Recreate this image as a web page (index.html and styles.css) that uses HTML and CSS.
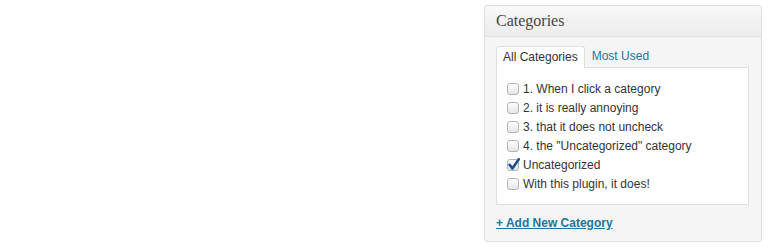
FILE: index.html
```html
<!DOCTYPE html>
<html>

    <head>
        <title>Categories</title>
        <link rel="stylesheet" href="styles.css">
    </head>

    <body>
        <div class="postbox">
            <h3 class="hndle">Categories</h3>
            <div class="inside">
                <ul class="tabs">
                    <li class="tab active">All Categories</li>
                    <li class="tab"><a href="#">Most Used</a></li>
                </ul>
                <div class="panel">
                    <ul class="checklist">
                        <li><span class="box"></span>1. When I click a category</li>
                        <li><span class="box"></span>2. it is really annoying</li>
                        <li><span class="box"></span>3. that it does not uncheck</li>
                        <li><span class="box"></span>4. the "Uncategorized" category</li>
                        <li>
                            <span class="box checked">
                                <svg viewBox="0 0 13 13" width="13" height="13">
                                    <path d="M2.6 6.8 L5.4 10.4 L11.8 1.2" fill="none" stroke="#1f4f8a" stroke-width="2.6" stroke-linecap="round" stroke-linejoin="round"/>
                                </svg>
                            </span>Uncategorized
                        </li>
                        <li><span class="box"></span>With this plugin, it does!</li>
                    </ul>
                </div>
                <a class="add-new" href="#">+ Add New Category</a>
            </div>
        </div>
    </body>

</html>
```

FILE: styles.css
```css
body {
    margin: 0;
    background: #fff;
    font-family: "Liberation Sans", Arial, sans-serif;
    font-size: 12px;
    color: #333;
}

.postbox {
    box-sizing: border-box;
    width: 278px;
    height: 237px;
    margin: 5px 0 0 484px;
    background: #f5f5f5;
    border: 1px solid #dfdfdf;
    border-radius: 3px;
}

.hndle {
    box-sizing: border-box;
    height: 31px;
    margin: 0;
    padding: 0 11px;
    line-height: 30px;
    font-family: "Liberation Serif", Georgia, serif;
    font-size: 16px;
    font-weight: normal;
    color: #464646;
    background: linear-gradient(#f9f9f9, #ececec);
    border-bottom: 1px solid #dfdfdf;
    border-radius: 3px 3px 0 0;
}

.inside {
    padding: 8px 12px 0 11px;
}

.tabs {
    display: flex;
    margin: 0;
    padding: 0;
    list-style: none;
}

.tab {
    height: 21px;
    padding: 0 6px;
    line-height: 21px;
    border: 1px solid transparent;
    border-bottom: none;
}

.tab a {
    color: #21759b;
    text-decoration: none;
}

.tab.active {
    background: #fff;
    border-color: #dfdfdf;
    border-radius: 3px 3px 0 0;
    color: #333;
    position: relative;
    top: 1px;
}

.panel {
    box-sizing: border-box;
    width: 253px;
    height: 138px;
    background: #fff;
    border: 1px solid #dfdfdf;
}

.checklist {
    margin: 0;
    padding: 11px 0 0 10px;
    list-style: none;
}

.checklist li {
    display: flex;
    align-items: center;
    height: 19px;
}

.box {
    box-sizing: border-box;
    position: relative;
    width: 12px;
    height: 12px;
    margin-right: 4px;
    border: 1px solid #b4b4b4;
    border-radius: 3px;
    background: linear-gradient(#fefefe, #e6e6e6);
}

.box svg {
    position: absolute;
    left: -1px;
    top: -2px;
}

.add-new {
    display: inline-block;
    margin-top: 11px;
    font-weight: bold;
    color: #21759b;
    text-decoration: underline;
}
```
